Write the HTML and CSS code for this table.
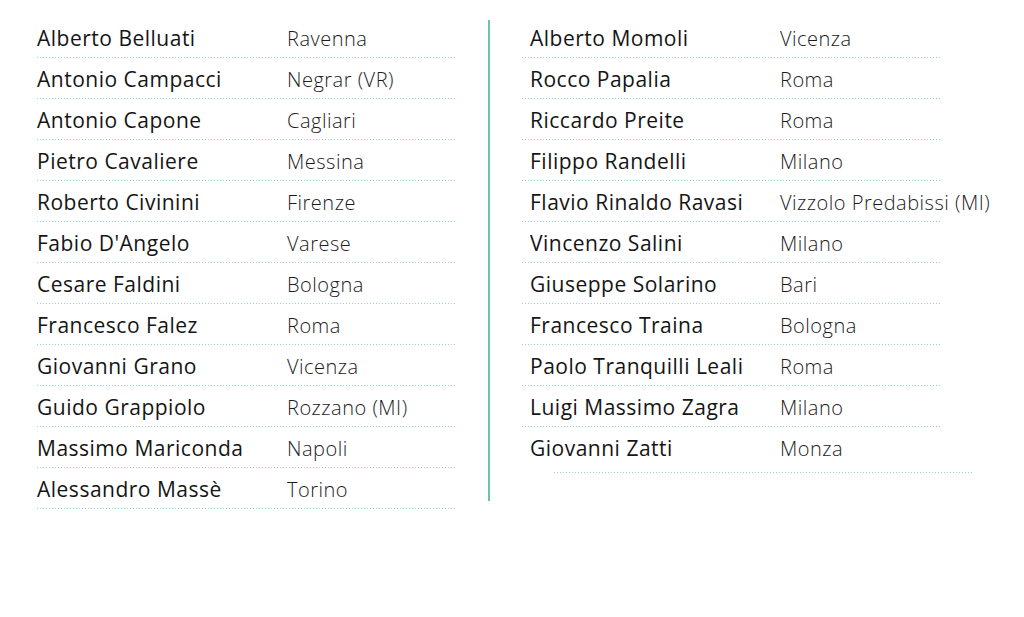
FILE: index.html
```html
<!DOCTYPE html>
<html lang="it">
<head>
<meta charset="utf-8">
<title>Elenco</title>
<link rel="stylesheet" href="styles.css">
</head>
<body>
<div class="page">
  <div class="col col-left">
    <div class="row"><span class="name">Alberto Belluati</span><span class="city">Ravenna</span></div>
    <div class="row"><span class="name">Antonio Campacci</span><span class="city">Negrar (VR)</span></div>
    <div class="row"><span class="name">Antonio Capone</span><span class="city">Cagliari</span></div>
    <div class="row"><span class="name">Pietro Cavaliere</span><span class="city">Messina</span></div>
    <div class="row"><span class="name">Roberto Civinini</span><span class="city">Firenze</span></div>
    <div class="row"><span class="name">Fabio D'Angelo</span><span class="city">Varese</span></div>
    <div class="row"><span class="name">Cesare Faldini</span><span class="city">Bologna</span></div>
    <div class="row"><span class="name">Francesco Falez</span><span class="city">Roma</span></div>
    <div class="row"><span class="name">Giovanni Grano</span><span class="city">Vicenza</span></div>
    <div class="row"><span class="name">Guido Grappiolo</span><span class="city">Rozzano (MI)</span></div>
    <div class="row"><span class="name">Massimo Mariconda</span><span class="city">Napoli</span></div>
    <div class="row"><span class="name">Alessandro Massè</span><span class="city">Torino</span></div>
  </div>
  <div class="divider"></div>
  <div class="col col-right">
    <div class="row"><span class="name">Alberto Momoli</span><span class="city">Vicenza</span></div>
    <div class="row"><span class="name">Rocco Papalia</span><span class="city">Roma</span></div>
    <div class="row"><span class="name">Riccardo Preite</span><span class="city">Roma</span></div>
    <div class="row"><span class="name">Filippo Randelli</span><span class="city">Milano</span></div>
    <div class="row"><span class="name">Flavio Rinaldo Ravasi</span><span class="city">Vizzolo Predabissi (MI)</span></div>
    <div class="row"><span class="name">Vincenzo Salini</span><span class="city">Milano</span></div>
    <div class="row"><span class="name">Giuseppe Solarino</span><span class="city">Bari</span></div>
    <div class="row"><span class="name">Francesco Traina</span><span class="city">Bologna</span></div>
    <div class="row"><span class="name">Paolo Tranquilli Leali</span><span class="city">Roma</span></div>
    <div class="row"><span class="name">Luigi Massimo Zagra</span><span class="city">Milano</span></div>
    <div class="row row-last"><span class="name">Giovanni Zatti</span><span class="city">Monza</span></div>
    <div class="stray-rule"></div>
  </div>
</div>
</body>
</html>
```
FILE: styles.css
```css
html, body {
  margin: 0;
  padding: 0;
  background: #ffffff;
}

body {
  font-family: "Open Sans", Lato, "Liberation Sans", sans-serif;
  font-variant-ligatures: none;
  color: #222222;
}

.page {
  display: flex;
  align-items: flex-start;
  padding: 17px 0 0 37px;
}

.col {
  display: flex;
  flex-direction: column;
  width: 420px;
}

.col-right {
  margin-left: 32px;
}

.divider {
  width: 2px;
  height: 481px;
  margin: 3px 0 0 31px;
  background: #6cc1b5;
}

.row {
  display: flex;
  align-items: center;
  height: 41px;
  box-sizing: border-box;
  padding-top: 2px;
  padding-bottom: 1px;
  background-image: linear-gradient(to right, #94d3ca 1px, transparent 1px);
  background-size: 3px 1px;
  background-repeat: repeat-x;
  background-position: left bottom;
}

.col-right .row {
  padding-left: 8px;
}

.row-last {
  background-image: none;
}

.name {
  width: 250px;
  flex: none;
  font-size: 21px;
  font-weight: 500;
  letter-spacing: 0.5px;
  color: #151515;
}

.city {
  font-size: 20px;
  font-weight: 300;
  letter-spacing: 0.5px;
  color: #1c1c1c;
  white-space: nowrap;
}

.stray-rule {
  height: 1px;
  width: 420px;
  margin: 4px 0 0 32px;
  background-image: linear-gradient(to right, #94d3ca 1px, transparent 1px);
  background-size: 3px 1px;
  background-repeat: repeat-x;
}
```
